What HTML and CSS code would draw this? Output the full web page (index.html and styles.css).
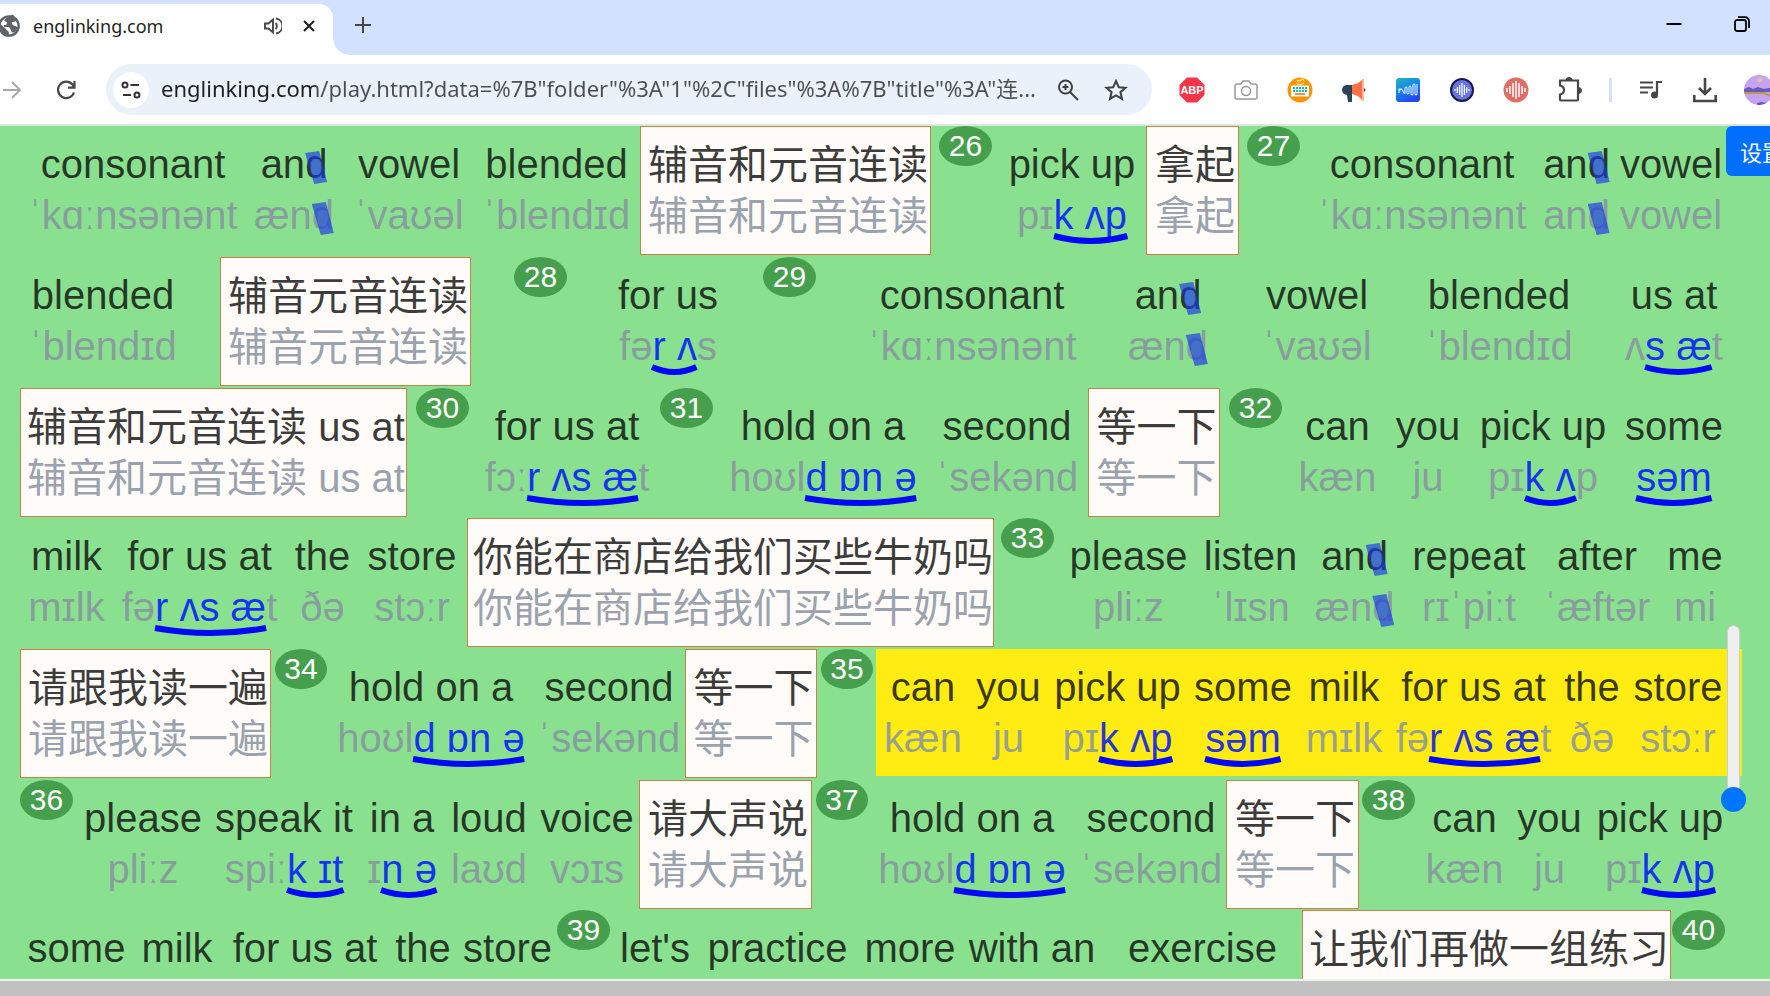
FILE: index.html
```html
<!DOCTYPE html>
<html lang="en">
<head>
<meta charset="utf-8">
<title>englinking.com</title>
<link rel="stylesheet" href="styles.css">
</head>
<body>
<svg class="defs" aria-hidden="true">
  <defs><path id="arc" d="M0 3Q50 13 100 3" vector-effect="non-scaling-stroke"/></defs>
</svg>
<div class="window">
  <header class="tabstrip">
    <div class="tab">
      <svg class="globe" viewBox="0 0 24 24"><circle cx="12" cy="12" r="10.500" fill="#fff" stroke="#5f6368" stroke-width="2.600"/><path d="M13 1l-5 3q-2 2 0 3l2 1-1 3H6l1 2h5l2 3 1 3h3q2-3 4-5l-3-2-3-1-1-3 4-1 1-3-4-5z" fill="#5f6368"/><path d="M1.500 9l7 6q1 2 3 3l1 5Q3 22 1.500 9z" fill="#5f6368"/></svg>
      <span class="tab-title">englinking.com</span>
      <button class="icon-btn" aria-label="Mute tab"><svg width="18" height="18" viewBox="0 0 18 18" fill="none" stroke="#474747" stroke-width="1.900"><path d="M1 6.500h3.500L9 2.500v13L4.500 11.500H1z"/><path d="M11.500 6a4 4 0 0 1 0 6M12 1.500a7.600 7.600 0 0 1 0 15"/></svg></button>
      <button class="icon-btn" aria-label="Close tab"><svg width="12" height="12" viewBox="0 0 12 12" stroke="#1f1f1f" stroke-width="2"><path d="M1 1l10 10M11 1L1 11"/></svg></button>
    </div>
    <button class="icon-btn new-tab" aria-label="New tab"><svg width="16" height="16" viewBox="0 0 16 16" stroke="#474747" stroke-width="2"><path d="M8 0v16M0 8h16"/></svg></button>
    <div class="window-buttons">
      <button class="icon-btn" aria-label="Minimize"><svg width="16" height="16" viewBox="0 0 16 16" stroke="#000" stroke-width="2"><path d="M.5 8h15"/></svg></button>
      <button class="icon-btn" aria-label="Restore"><svg width="16" height="16" viewBox="0 0 16 16" fill="none" stroke="#000" stroke-width="1.800"><rect x="1" y="4" width="11" height="11" rx="2"/><path d="M4 1.200h7a4 4 0 0 1 4 4V12"/></svg></button>
    </div>
  </header>

  <nav class="toolbar">
    <button class="icon-btn nav-btn" aria-label="Forward"><svg width="20" height="20" viewBox="0 0 20 20" fill="none" stroke="#a6a8ab" stroke-width="1.900"><path d="M1 10h17M10 2l8 8-8 8"/></svg></button>
    <button class="icon-btn nav-btn" aria-label="Reload"><svg width="20" height="20" viewBox="0 0 20 20" fill="none" stroke="#474747" stroke-width="2.200"><path d="M18 12.500A8.200 8.200 0 1 1 16.500 4.500L18 7M18.500 1v6.600H12"/></svg></button>
    <div class="address">
      <button class="icon-btn site-info" aria-label="Site information"><svg width="20" height="20" viewBox="0 0 20 20" fill="none" stroke="#333" stroke-width="2"><circle cx="4" cy="5" r="2.500"/><path d="M9.500 5H18M2 15h8"/><circle cx="16" cy="15" r="2.500"/></svg></button>
      <input class="url" type="text" aria-label="Address" value="englinking.com/play.html?data=%7B&quot;folder&quot;%3A&quot;1&quot;%2C&quot;files&quot;%3A%7B&quot;title&quot;%3A&quot;连...">
      <button class="icon-btn addr-btn" aria-label="Zoom"><svg width="22" height="22" viewBox="0 0 22 22" fill="none" stroke="#3c4043" stroke-width="2"><circle cx="8.500" cy="8" r="6.500"/><path d="M13 13l8 8M8.500 5v6M5.500 8h6"/></svg></button>
      <button class="icon-btn addr-btn" aria-label="Bookmark"><svg width="24" height="22" viewBox="0 0 24 22" fill="none" stroke="#3c4043" stroke-width="2"><path d="M12 2l2.800 6.200 6.700.6-5.100 4.400 1.600 6.700L12 16.300 6 19.900l1.600-6.700L2.500 8.800l6.700-.6z"/></svg></button>
    </div>
    <button class="icon-btn ext" aria-label="ABP"><svg width="26" height="26" viewBox="0 0 26 26"><path d="M8 .5h10L25.500 8v10L18 25.500H8L.5 18V8z" fill="#f5344a"/><text x="13" y="17" text-anchor="middle" class="abp">ABP</text></svg></button>
    <button class="icon-btn ext" aria-label="Screenshot"><svg width="24" height="20" viewBox="0 0 24 20" fill="none" stroke="#999" stroke-width="1.500"><path d="M3 4h4l2-3h6l2 3h4q2 0 2 2v11q0 2-2 2H3q-2 0-2-2V6q0-2 2-2z"/><circle cx="12" cy="11" r="4.500"/></svg></button>
    <button class="icon-btn ext" aria-label="Keyboard"><svg width="26" height="26" viewBox="0 0 26 26"><circle cx="13" cy="13" r="12.500" fill="#ff9208"/><path d="M10 3q2 2 4 0t3 1M9 6q4 3 8 0" stroke="#ffe27a" stroke-width="1.500" fill="none"/><rect x="4" y="8.500" width="18" height="11" rx="1" fill="#e8fff0"/><path d="M6 11h14M6 14h14" stroke="#26b5a8" stroke-width="2" stroke-dasharray="2 1"/><path d="M8 17h10" stroke="#e96b20" stroke-width="1.500"/></svg></button>
    <button class="icon-btn ext" aria-label="Megaphone"><svg width="26" height="26" viewBox="0 0 26 26"><path d="M11 8H5Q1 9 1 13t5 5l1 7h4v-7z" fill="#2f4358"/><path d="M11 8q6-1 10-5v20q-4-5-10-6z" fill="#ff7043"/><path d="M21 2h2v22h-2z" fill="#f6b79f"/><path d="M23 11q3 2 0 4z" fill="#2f4358"/></svg></button>
    <button class="icon-btn ext" aria-label="Sound waves"><svg width="26" height="26" viewBox="0 0 26 26"><defs><linearGradient id="wave" x2=".5" y2="1"><stop stop-color="#25b8b6"/><stop offset=".5" stop-color="#1787ea"/><stop offset="1" stop-color="#2148f4"/></linearGradient></defs><rect x="1" y="1" width="24" height="24" rx="3" fill="url(#wave)"/><path d="M4 16v-4h3M4 14q3-3 4 0t2 2V11q1-2 2 0v5q1 2 2 0v-6q1-2 2 0v7q1 2 2 0V8q1-2 2 0v9q1 2 2 0V7" fill="none" stroke="#d5efff" stroke-width="1.100"/></svg></button>
    <button class="icon-btn ext" aria-label="Voice"><svg width="26" height="26" viewBox="0 0 26 26"><circle cx="13" cy="13" r="11" fill="#6674e8" stroke="#17184a" stroke-width="2"/><path d="M6 12v2M8.300 10v6M10.600 8v10M13 6v14M15.400 8v10M17.700 10v6M20 12v2" stroke="#fff" stroke-width="1.300"/></svg></button>
    <button class="icon-btn ext" aria-label="Recorder"><svg width="26" height="26" viewBox="0 0 26 26"><circle cx="13" cy="13" r="12.500" fill="#e06e66"/><path d="M4 11v4M7 9v8M10 6v14M13 4v18M16 6v14M19 9v8M22 11v4" stroke="#fff" stroke-width="1.500"/></svg></button>
    <button class="icon-btn ext" aria-label="Extensions"><svg width="26" height="26" viewBox="0 0 26 26" fill="none" stroke="#474747" stroke-width="2.200"><path d="M3 3.500h18v19q0 1-1 1H4q-1 0-1-1v-5q4-1 4-4.500T3 8.500z"/><path d="M9 3q0-2.500 3-2.500T15 3zM21.500 10.500q3 0 3 3t-3 3z" fill="#474747" stroke-width="1"/></svg></button>
    <span class="divider"></span>
    <button class="icon-btn ext" aria-label="Media"><svg width="24" height="20" viewBox="0 0 24 20"><path d="M1 2.500h13M1 7.500h13M1 12.500h8M18 15V2h5" fill="none" stroke="#474747" stroke-width="2.200"/><circle cx="15.500" cy="15" r="3.500" fill="#474747"/></svg></button>
    <button class="icon-btn ext" aria-label="Downloads"><svg width="24" height="26" viewBox="0 0 24 26" fill="none" stroke="#474747" stroke-width="2.600"><path d="M12 1v15M6 11l6 6 6-6M1.300 18v6h21.400v-6"/></svg></button>
    <button class="icon-btn ext" aria-label="Profile"><svg width="30" height="30" viewBox="0 0 30 30"><defs><clipPath id="av"><circle cx="15" cy="15" r="15"/></clipPath></defs><g clip-path="url(#av)"><path d="M0 0h30v30H0z" fill="#c5a3ee"/><circle cx="16" cy="5" r="2.500" fill="#dcc0a0"/><path d="M0 14l5-2 4 2 5-2 6 2 10-2v5H0z" fill="#6c58bd"/><path d="M0 17h20l10 4v2l-11-4H0z" fill="#b99852"/><path d="M13 28l5-1 8 2v2H13z" fill="#7450c0"/></g></svg></button>
  </nav>

  <main class="lesson">
    <div class="line line-1">
      <span class="word"><span>consonant</span><span class="ipa">ˈkɑːnsənənt</span></span>
      <span class="word"><span>an<span class="mute">d</span></span><span class="ipa">æn<span class="mute">d</span></span></span>
      <span class="word"><span>vowel</span><span class="ipa">ˈvaʊəl</span></span>
      <span class="word"><span>blended</span><span class="ipa">ˈblendɪd</span></span>
      <span class="word zh"><span>辅音和元音连读</span><span class="ipa">辅音和元音连读</span></span>
      <span class="badge">26</span>
      <span class="word"><span>pick up</span><span class="ipa">pɪ<span class="link">k ʌp<svg viewBox="0 0 100 12" preserveAspectRatio="none"><use href="#arc"/></svg></span></span></span>
      <span class="word zh"><span>拿起</span><span class="ipa">拿起</span></span>
      <span class="badge">27</span>
      <span class="word"><span>consonant</span><span class="ipa">ˈkɑːnsənənt</span></span>
      <span class="word"><span>an<span class="mute">d</span></span><span class="ipa">an<span class="mute">d</span></span></span>
      <span class="word"><span>vowel</span><span class="ipa">vowel</span></span>
    </div>
    <div class="line line-2">
      <span class="word"><span>blended</span><span class="ipa">ˈblendɪd</span></span>
      <span class="word zh"><span>辅音元音连读</span><span class="ipa">辅音元音连读</span></span>
      <span class="badge">28</span>
      <span class="word"><span>for us</span><span class="ipa">fə<span class="link">r ʌ<svg viewBox="0 0 100 12" preserveAspectRatio="none"><use href="#arc"/></svg></span>s</span></span>
      <span class="badge">29</span>
      <span class="word"><span>consonant</span><span class="ipa">ˈkɑːnsənənt</span></span>
      <span class="word"><span>an<span class="mute">d</span></span><span class="ipa">æn<span class="mute">d</span></span></span>
      <span class="word"><span>vowel</span><span class="ipa">ˈvaʊəl</span></span>
      <span class="word"><span>blended</span><span class="ipa">ˈblendɪd</span></span>
      <span class="word"><span>us at</span><span class="ipa">ʌ<span class="link">s æ<svg viewBox="0 0 100 12" preserveAspectRatio="none"><use href="#arc"/></svg></span>t</span></span>
    </div>
    <div class="line line-3">
      <span class="word zh"><span>辅音和元音连读 us at</span><span class="ipa">辅音和元音连读 us at</span></span>
      <span class="badge">30</span>
      <span class="word"><span>for us at</span><span class="ipa">fɔː<span class="link">r ʌs æ<svg viewBox="0 0 100 12" preserveAspectRatio="none"><use href="#arc"/></svg></span>t</span></span>
      <span class="badge">31</span>
      <span class="word"><span>hold on a</span><span class="ipa">hoʊl<span class="link">d ɒn ə<svg viewBox="0 0 100 12" preserveAspectRatio="none"><use href="#arc"/></svg></span></span></span>
      <span class="word"><span>second</span><span class="ipa">ˈsekənd</span></span>
      <span class="word zh"><span>等一下</span><span class="ipa">等一下</span></span>
      <span class="badge">32</span>
      <span class="word"><span>can</span><span class="ipa">kæn</span></span>
      <span class="word"><span>you</span><span class="ipa">ju</span></span>
      <span class="word"><span>pick up</span><span class="ipa">pɪ<span class="link">k ʌ<svg viewBox="0 0 100 12" preserveAspectRatio="none"><use href="#arc"/></svg></span>p</span></span>
      <span class="word"><span>some</span><span class="ipa"><span class="link">səm<svg viewBox="0 0 100 12" preserveAspectRatio="none"><use href="#arc"/></svg></span></span></span>
    </div>
    <div class="line line-4">
      <span class="word"><span>milk</span><span class="ipa">mɪlk</span></span>
      <span class="word"><span>for us at</span><span class="ipa">fə<span class="link">r ʌs æ<svg viewBox="0 0 100 12" preserveAspectRatio="none"><use href="#arc"/></svg></span>t</span></span>
      <span class="word"><span>the</span><span class="ipa">ðə</span></span>
      <span class="word"><span>store</span><span class="ipa">stɔːr</span></span>
      <span class="word zh"><span>你能在商店给我们买些牛奶吗</span><span class="ipa">你能在商店给我们买些牛奶吗</span></span>
      <span class="badge">33</span>
      <span class="word"><span>please</span><span class="ipa">pliːz</span></span>
      <span class="word"><span>listen</span><span class="ipa">ˈlɪsn</span></span>
      <span class="word"><span>an<span class="mute">d</span></span><span class="ipa">æn<span class="mute">d</span></span></span>
      <span class="word"><span>repeat</span><span class="ipa">rɪˈpiːt</span></span>
      <span class="word"><span>after</span><span class="ipa">ˈæftər</span></span>
      <span class="word"><span>me</span><span class="ipa">mi</span></span>
    </div>
    <div class="line line-5">
      <span class="word zh"><span>请跟我读一遍</span><span class="ipa">请跟我读一遍</span></span>
      <span class="badge">34</span>
      <span class="word"><span>hold on a</span><span class="ipa">hoʊl<span class="link">d ɒn ə<svg viewBox="0 0 100 12" preserveAspectRatio="none"><use href="#arc"/></svg></span></span></span>
      <span class="word"><span>second</span><span class="ipa">ˈsekənd</span></span>
      <span class="word zh"><span>等一下</span><span class="ipa">等一下</span></span>
      <span class="badge">35</span>
      <div class="line current">
        <span class="word"><span>can</span><span class="ipa">kæn</span></span>
        <span class="word"><span>you</span><span class="ipa">ju</span></span>
        <span class="word"><span>pick up</span><span class="ipa">pɪ<span class="link">k ʌp<svg viewBox="0 0 100 12" preserveAspectRatio="none"><use href="#arc"/></svg></span></span></span>
        <span class="word"><span>some</span><span class="ipa"><span class="link">səm<svg viewBox="0 0 100 12" preserveAspectRatio="none"><use href="#arc"/></svg></span></span></span>
        <span class="word"><span>milk</span><span class="ipa">mɪlk</span></span>
        <span class="word"><span>for us at</span><span class="ipa">fə<span class="link">r ʌs æ<svg viewBox="0 0 100 12" preserveAspectRatio="none"><use href="#arc"/></svg></span>t</span></span>
        <span class="word"><span>the</span><span class="ipa">ðə</span></span>
        <span class="word"><span>store</span><span class="ipa">stɔːr</span></span>
      </div>
    </div>
    <div class="line line-6">
      <span class="badge">36</span>
      <span class="word"><span>please</span><span class="ipa">pliːz</span></span>
      <span class="word"><span>speak it</span><span class="ipa">spiː<span class="link">k ɪt<svg viewBox="0 0 100 12" preserveAspectRatio="none"><use href="#arc"/></svg></span></span></span>
      <span class="word"><span>in a</span><span class="ipa">ɪ<span class="link">n ə<svg viewBox="0 0 100 12" preserveAspectRatio="none"><use href="#arc"/></svg></span></span></span>
      <span class="word"><span>loud</span><span class="ipa">laʊd</span></span>
      <span class="word"><span>voice</span><span class="ipa">vɔɪs</span></span>
      <span class="word zh"><span>请大声说</span><span class="ipa">请大声说</span></span>
      <span class="badge">37</span>
      <span class="word"><span>hold on a</span><span class="ipa">hoʊl<span class="link">d ɒn ə<svg viewBox="0 0 100 12" preserveAspectRatio="none"><use href="#arc"/></svg></span></span></span>
      <span class="word"><span>second</span><span class="ipa">ˈsekənd</span></span>
      <span class="word zh"><span>等一下</span><span class="ipa">等一下</span></span>
      <span class="badge">38</span>
      <span class="word"><span>can</span><span class="ipa">kæn</span></span>
      <span class="word"><span>you</span><span class="ipa">ju</span></span>
      <span class="word"><span>pick up</span><span class="ipa">pɪ<span class="link">k ʌp<svg viewBox="0 0 100 12" preserveAspectRatio="none"><use href="#arc"/></svg></span></span></span>
    </div>
    <div class="line line-7">
      <span class="word"><span>some</span></span>
      <span class="word"><span>milk</span></span>
      <span class="word"><span>for us at</span></span>
      <span class="word"><span>the</span></span>
      <span class="word"><span>store</span></span>
      <span class="badge">39</span>
      <span class="word"><span>let's</span></span>
      <span class="word"><span>practice</span></span>
      <span class="word"><span>more</span></span>
      <span class="word"><span>with an</span></span>
      <span class="word"><span>exercise</span></span>
      <span class="word zh"><span>让我们再做一组练习</span></span>
      <span class="badge">40</span>
    </div>
    <button class="settings">设置</button>
    <input class="slider" type="range" min="0" max="100" value="100" aria-label="Speed">
  </main>
  <footer class="taskbar"></footer>
</div>
</body>
</html>
```
FILE: styles.css
```css
* { box-sizing: border-box; }
body {
  margin: 0;
  overflow: hidden;
  background: #fff;
  font-family: "Liberation Sans", "Noto Sans CJK SC", sans-serif;
}
.defs { position: absolute; width: 0; height: 0; }
.window { display: flex; flex-direction: column; height: 100vh; overflow: hidden; }

/* browser chrome */
.icon-btn {
  display: flex;
  align-items: center;
  justify-content: center;
  flex: none;
  padding: 0;
  border: 0;
  background: none;
}
.tabstrip {
  display: flex;
  flex: none;
  height: 55px;
  padding-top: 4px;
  background: #d1e1ff;
}
.tab {
  position: relative;
  display: flex;
  align-items: center;
  width: 333px;
  padding: 0 15px 8px 0;
  border-radius: 0 14px 0 0;
  background: #fff;
}
.tab::after {
  content: "";
  position: absolute;
  right: -16px;
  bottom: 0;
  width: 16px;
  height: 16px;
  background: radial-gradient(circle at 100% 0, transparent 15px, #fff 16px);
}
.globe { flex: none; width: 22px; height: 22px; margin-left: -2px; }
.tab-title {
  flex: 1;
  padding-left: 13px;
  color: #1f1f1f;
  font: 18px/24px "Noto Sans", sans-serif;
}
.tab .icon-btn { width: 36px; height: 32px; }
.tab .icon-btn:last-child { width: 18px; margin-left: 9px; }
.new-tab { width: 32px; height: 42px; margin-left: 14px; }
.window-buttons { display: flex; margin-right: -6px; margin-left: auto; }
.window-buttons .icon-btn { width: 68px; height: 40px; }
.toolbar {
  display: flex;
  flex: none;
  align-items: center;
  height: 71px;
  margin-right: -16px;
  border-bottom: 2px solid #dde5df;
  background: #fff;
}
.nav-btn { width: 54px; height: 40px; }
.nav-btn:first-child { width: 24px; margin-right: 15px; }
.address {
  display: flex;
  flex: 1;
  align-items: center;
  min-width: 0;
  height: 51px;
  margin: 0 13px;
  padding: 0 12px 0 7px;
  border-radius: 26px;
  background: #eaf1fa;
}
.site-info { width: 36px; height: 36px; border-radius: 50%; background: #fff; }
.url {
  flex: 1;
  min-width: 0;
  margin-left: 12px;
  padding: 0 0 3px;
  border: 0;
  outline: 0;
  background: linear-gradient(90deg, #1f1f1f 155px, #4b4e52 155px);
  -webkit-background-clip: text;
  background-clip: text;
  -webkit-text-fill-color: transparent;
  font: 22px/34px "Noto Sans", "Noto Sans CJK SC", sans-serif;
}
.addr-btn { width: 48px; height: 40px; }
.ext { width: 54px; height: 40px; }
.abp { fill: #fff; font: bold 11px "Liberation Sans", sans-serif; }
.divider { flex: none; width: 3px; height: 24px; margin: 0 12px; background: #d1e1ff; }

/* lesson text: each line alternates gap and cell tracks */
.lesson {
  position: relative;
  display: grid;
  flex: 1;
  grid-template-rows: repeat(2, 131px 131px 130px) 131px;
  align-content: start;
  min-height: 0;
  overflow: hidden;
  border-bottom: 2px solid #e8f5e9;
  background: #89e18f;
}
.line { display: grid; align-items: start; }
.line > * { min-width: 0; grid-row: 1; }
.line > :nth-child(1) { grid-column: 2; }
.line > :nth-child(2) { grid-column: 4; }
.line > :nth-child(3) { grid-column: 6; }
.line > :nth-child(4) { grid-column: 8; }
.line > :nth-child(5) { grid-column: 10; }
.line > :nth-child(6) { grid-column: 12; }
.line > :nth-child(7) { grid-column: 14; }
.line > :nth-child(8) { grid-column: 16; }
.line > :nth-child(9) { grid-column: 18; }
.line > :nth-child(10) { grid-column: 20; }
.line > :nth-child(11) { grid-column: 22; }
.line > :nth-child(12) { grid-column: 24; }
.line > :nth-child(13) { grid-column: 26; }
.line > :nth-child(14) { grid-column: 28; }
.line > :nth-child(15) { grid-column: 30; }
.line-1 { grid-template-columns: 34fr 198fr 24fr 76fr 27fr 100fr 27fr 141fr 13fr 291fr 8fr 53fr 18fr 124fr 12fr 93fr 8fr 53fr 22fr 200fr 23fr 63fr 13fr 100fr 49fr; }
.line-2 { grid-template-columns: 32fr 142fr 46fr 251fr 43fr 53fr 52fr 98fr 46fr 53fr 56fr 200fr 58fr 76fr 61fr 100fr 62fr 140fr 57fr 96fr 48fr; }
.line-3 { grid-template-columns: 20fr 387fr 9fr 53fr 17fr 162fr 12fr 53fr 18fr 184fr 24fr 136fr 13fr 132fr 9fr 53fr 18fr 75fr 22fr 62fr 22fr 124fr 21fr 96fr 48fr; }
.line-4 { grid-template-columns: 28fr 77fr 18fr 153fr 20fr 53fr 19fr 88fr 11fr 527fr 7fr 53fr 17fr 115fr 19fr 91fr 20fr 77fr 20fr 112fr 21fr 102fr 21fr 52fr 49fr; }
.line-5 { grid-template-columns: 20fr 251fr 4fr 52fr 12fr 184fr 18fr 136fr 8fr 132fr 4fr 52fr 3fr 866fr 28fr; }
.line-6 { grid-template-columns: 20fr 53fr 12fr 116fr 15fr 136fr 16fr 68fr 17fr 72fr 16fr 92fr 6fr 173fr 4fr 52fr 12fr 184fr 19fr 136fr 7fr 133fr 3fr 53fr 12fr 75fr 17fr 61fr 18fr 124fr 48fr; }
.line-7 { grid-template-columns: 28fr 97fr 17fr 70fr 22fr 142fr 20fr 54fr 14fr 87fr 6fr 53fr 11fr 68fr 20fr 137fr 19fr 90fr 13fr 128fr 33fr 147fr 26fr 369fr 1fr 53fr 45fr; }
.current {
  grid-template-columns: 9fr 76fr 16fr 63fr 15fr 125fr 15fr 96fr 15fr 76fr 15fr 153fr 15fr 54fr 16fr 86fr 21fr;
  height: 127px;
  background: #ffec12;
}
.word {
  display: flex;
  flex-direction: column;
  align-items: center;
  padding-top: 13px;
  color: rgba(16, 16, 16, 0.82);
  font-size: 40px;
  line-height: 51px;
  white-space: nowrap;
}
.zh {
  height: 129px;
  padding-left: 5px;
  border: 1px solid #c9814a;
  background: #fffbf9;
}
.ipa { color: rgba(136, 146, 160, 0.85); }
.link { position: relative; color: rgba(0, 20, 255, 0.85); }
.link svg {
  position: absolute;
  top: 40px;
  left: 0;
  width: 100%;
  height: 12px;
  overflow: visible;
  fill: none;
  stroke: #0008f5;
  stroke-width: 6px;
}
.mute { position: relative; }
.mute::after {
  content: "";
  position: absolute;
  top: 9px;
  left: 0;
  width: 22px;
  height: 33px;
  background: rgba(28, 54, 230, 0.66);
  clip-path: polygon(0 6%, 64% 0, 100% 94%, 41% 100%);
}
.badge {
  height: 40px;
  border-radius: 50%;
  background: #469f4d;
  color: #fff;
  font-size: 30px;
  line-height: 39px;
  text-align: center;
}
.settings {
  position: absolute;
  top: 0;
  right: -28px;
  height: 50px;
  padding: 0 14px;
  border: 0;
  border-radius: 6px;
  background: #006fff;
  color: #fff;
  font: 22px/30px "Noto Sans CJK SC", sans-serif;
}
.slider {
  position: absolute;
  top: 499px;
  right: 24px;
  width: 25px;
  height: 188px;
  margin: 0;
  appearance: none;
  background: none;
  writing-mode: vertical-lr;
}
.slider::-webkit-slider-runnable-track {
  width: 13px;
  border: 1px solid #ccc;
  border-radius: 7px;
  background: #efefef;
}
.slider::-webkit-slider-thumb {
  appearance: none;
  width: 25px;
  height: 25px;
  margin-left: -7px;
  border-radius: 50%;
  background: #0075ff;
}
.taskbar { flex: none; height: 15px; background: #c1c1c1; }
```
